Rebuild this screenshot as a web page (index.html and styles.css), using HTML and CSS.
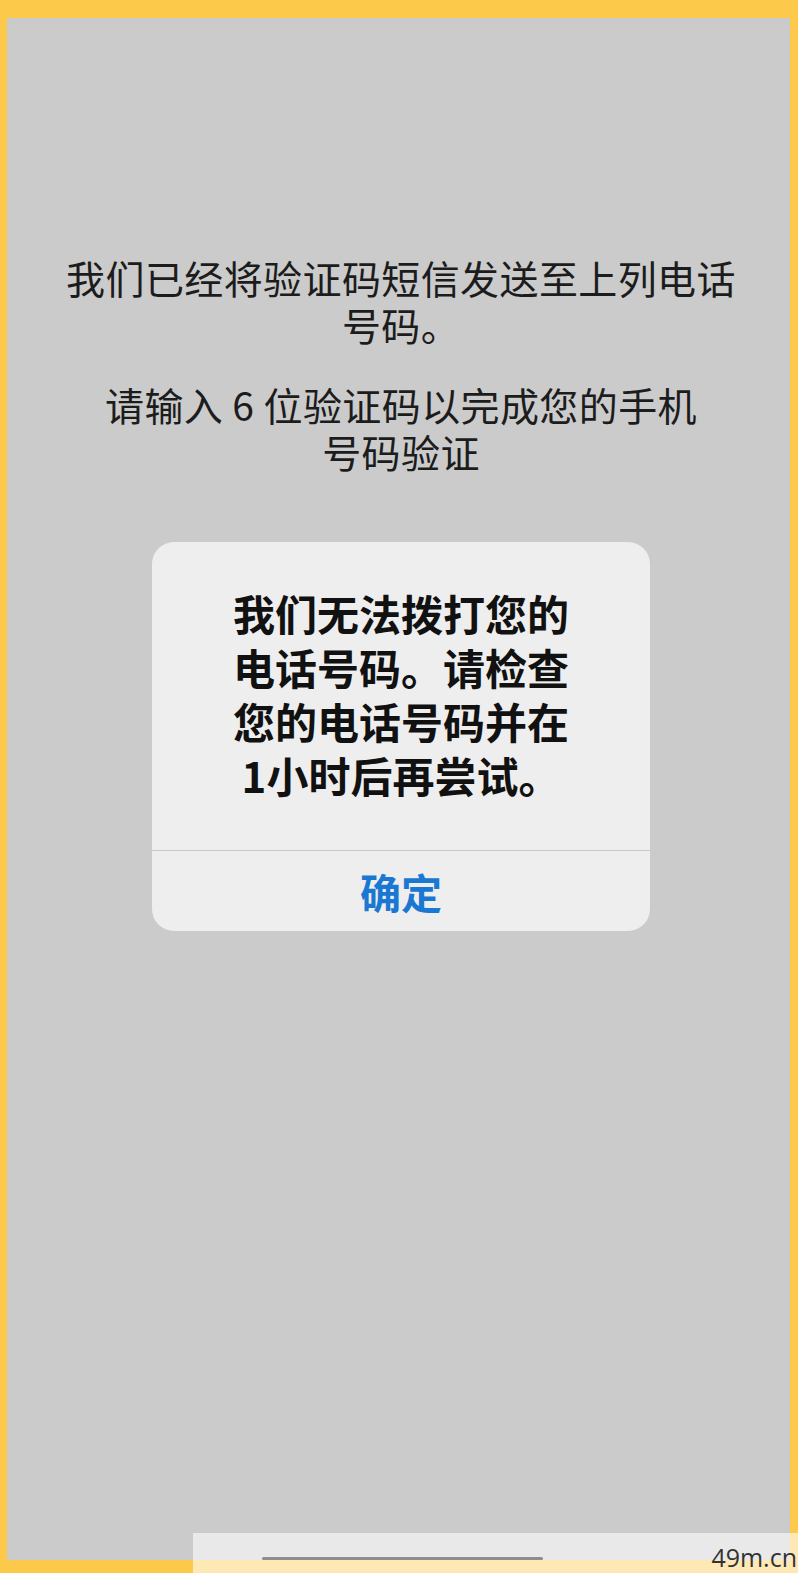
FILE: index.html
```html
<!DOCTYPE html>
<html lang="zh-CN">
<head>
<meta charset="utf-8">
<title>验证码</title>
<link rel="stylesheet" href="styles.css">
</head>
<body>
<div class="screen">
  <div class="content">
    <p class="msg msg-first">我们已经将验证码短信发送至上列电话<br>号码。</p>
    <p class="msg msg-second">请输入 6 位验证码以完成您的手机<br>号码验证</p>
    <div class="dialog">
      <p class="dialog-title">我们无法拨打您的<br>电话号码。请检查<br>您的电话号码并在<br>1小时后再尝试。</p>
      <div class="dialog-action">确定</div>
    </div>
  </div>
</div>
<div class="overlay">
  <span class="home-indicator"></span>
  <span class="watermark">49m.cn</span>
</div>
</body>
</html>
```

FILE: styles.css
```css
html, body {
  margin: 0;
  padding: 0;
}

body {
  width: 798px;
  height: 1573px;
  overflow: hidden;
  position: relative;
  background: #fdc94b;
  font-family: "Noto Sans CJK SC", "Noto Sans", sans-serif;
}

.screen {
  margin: 18px 8px 0 7px;
  height: 1542px;
  background: #cbcbcb;
  box-sizing: border-box;
  padding-top: 236px;
}

.content {
  display: flex;
  flex-direction: column;
  align-items: center;
  padding-left: 5px;
}

.msg {
  margin: 0;
  text-align: center;
  font-size: 39px;
  line-height: 47px;
  letter-spacing: 0.4px;
  color: #1c1c1c;
  font-weight: 400;
}

.msg-second {
  margin-top: 33px;
}

.dialog {
  margin-top: 67px;
  width: 498px;
  background: #eeeeee;
  border-radius: 22px;
  display: flex;
  flex-direction: column;
}

.dialog-title {
  margin: 0;
  padding: 44px 20px 48px;
  text-align: center;
  font-size: 42px;
  line-height: 54px;
  font-weight: 700;
  color: #111111;
}

.dialog-action {
  border-top: 1px solid #c9c9c9;
  height: 80px;
  display: flex;
  align-items: center;
  justify-content: center;
  font-size: 41px;
  font-weight: 700;
  color: #1a78d3;
}

.overlay {
  position: absolute;
  left: 193px;
  top: 1533px;
  right: 0;
  bottom: 0;
  background: rgba(255, 255, 255, 0.58);
}

.home-indicator {
  position: absolute;
  left: 69px;
  top: 24px;
  width: 281px;
  height: 3px;
  border-radius: 2px;
  background: #8d8d8d;
}

.watermark {
  position: absolute;
  right: 1px;
  bottom: -1px;
  font-family: "Open Sans", "Liberation Sans", sans-serif;
  font-size: 25px;
  line-height: 34px;
  color: #333333;
}
```
